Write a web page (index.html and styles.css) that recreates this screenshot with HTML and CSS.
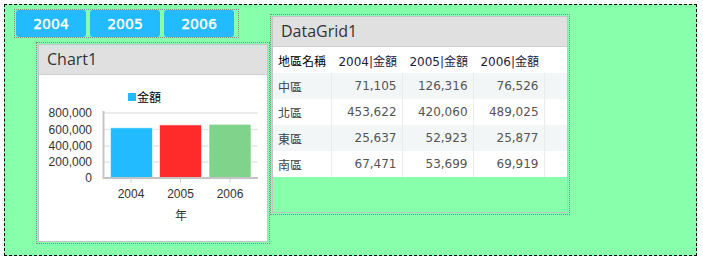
FILE: index.html
```html
<!DOCTYPE html>
<html lang="zh-Hant">
<head>
  <meta charset="UTF-8" />
  <title>Report</title>
  <link rel="stylesheet" href="styles.css">
</head>
<body>

<div class="canvas">
  <div class="left-col">
    <!-- YEAR BUTTONS -->
    <div class="btn-group">
      <button class="year-btn">2004</button>
      <button class="year-btn">2005</button>
      <button class="year-btn">2006</button>
    </div>

    <!-- CHART -->
    <div class="panel chart-panel">
      <div class="panel-inner">
        <div class="panel-title">Chart1</div>
        <div class="chart-body">
          <svg width="228" height="166" viewBox="39 76 228 166">
            <rect x="128" y="94" width="8" height="8" fill="#22bbff"/>
            <text x="137" y="103" class="legend">金額</text>

            <g stroke="#e6e6e6" stroke-width="1.5">
              <line x1="103" y1="114" x2="258" y2="114"/>
              <line x1="103" y1="130.5" x2="258" y2="130.5"/>
              <line x1="103" y1="147" x2="258" y2="147"/>
              <line x1="103" y1="163" x2="258" y2="163"/>
            </g>

            <g class="ylabels" text-anchor="end">
              <text x="92" y="118">800,000</text>
              <text x="92" y="134.5">600,000</text>
              <text x="92" y="151">400,000</text>
              <text x="92" y="167">200,000</text>
              <text x="92" y="183">0</text>
            </g>

            <g stroke="#ffffff" stroke-opacity="0.6" stroke-width="1">
              <rect x="110.5" y="128.8" width="42" height="50.2" fill="#22bbff"/>
              <rect x="159.5" y="125.9" width="42" height="53.1" fill="#ff2b2b"/>
              <rect x="209" y="125.3" width="42" height="53.7" fill="#7fd38a"/>
            </g>

            <g stroke="#c4c4c4" stroke-width="2">
              <line x1="103.5" y1="112" x2="103.5" y2="180"/>
              <line x1="103" y1="179" x2="258" y2="179"/>
            </g>
            <g stroke="#d0d0d0" stroke-width="1">
              <line x1="131" y1="180" x2="131" y2="184"/>
              <line x1="180.5" y1="180" x2="180.5" y2="184"/>
              <line x1="230" y1="180" x2="230" y2="184"/>
            </g>

            <g class="xlabels" text-anchor="middle">
              <text x="131" y="199">2004</text>
              <text x="180.5" y="199">2005</text>
              <text x="230" y="199">2006</text>
              <text x="181" y="221">年</text>
            </g>
          </svg>
        </div>
      </div>
    </div>
  </div>

  <!-- DATA GRID -->
  <div class="panel grid-panel">
    <div class="panel-inner">
      <div class="panel-title">DataGrid1</div>
      <table class="grid">
        <thead>
          <tr>
            <th class="name">地區名稱</th>
            <th>2004|金額</th>
            <th>2005|金額</th>
            <th>2006|金額</th>
            <th class="filler"></th>
          </tr>
        </thead>
        <tbody>
          <tr class="alt">
            <td class="name">中區</td><td>71,105</td><td>126,316</td><td>76,526</td><td class="filler"></td>
          </tr>
          <tr>
            <td class="name">北區</td><td>453,622</td><td>420,060</td><td>489,025</td><td class="filler"></td>
          </tr>
          <tr class="alt">
            <td class="name">東區</td><td>25,637</td><td>52,923</td><td>25,877</td><td class="filler"></td>
          </tr>
          <tr>
            <td class="name">南區</td><td>67,471</td><td>53,699</td><td>69,919</td><td class="filler"></td>
          </tr>
        </tbody>
      </table>
    </div>
  </div>
</div>

</body>
</html>
```

FILE: styles.css
```css
body, html {
  margin: 0;
  padding: 0;
  background: #fff;
  font-family: "DejaVu Sans", "Noto Sans CJK TC", sans-serif;
}

.canvas {
  margin: 4px;
  width: 691px;
  height: 250px;
  border: 1px dashed #000;
  background: #88ffaa;
  display: flex;
  align-items: flex-start;
}

.left-col {
  width: 265px;
  padding-top: 4px;
}

.btn-group {
  display: inline-flex;
  gap: 4px;
  margin-left: 9px;
  padding: 0 4px 0 1px;
  border: 1px dotted #888;
}

.year-btn {
  width: 70px;
  height: 27px;
  border: none;
  border-radius: 3px;
  background: #22bbff;
  color: #fff;
  font-family: "DejaVu Sans", sans-serif;
  font-size: 14px;
  -webkit-text-stroke: 0.4px #fff;
  padding: 0;
}

.panel {
  box-sizing: border-box;
  border: 1px dotted #888;
  padding: 1px;
}

.panel-inner {
  box-sizing: border-box;
  height: 100%;
  border: 1px solid #c4c4c4;
}

.panel-title {
  box-sizing: border-box;
  height: 30px;
  padding-left: 8px;
  background: #e0e0e0;
  border-bottom: 1px solid #cfcfcf;
  color: #333;
  font-family: "Open Sans", sans-serif;
  font-size: 16px;
  line-height: 29px;
}

.chart-panel {
  width: 234px;
  height: 202px;
  margin: 4px 0 0 31px;
}

.chart-body {
  height: 166px;
  background: #fff;
}

.chart-body svg {
  display: block;
}

.legend {
  font-family: "Liberation Sans", "Noto Sans CJK TC", sans-serif;
  font-size: 12px;
  fill: #000;
}

.ylabels text, .xlabels text {
  font-family: "Liberation Sans", "Noto Sans CJK TC", sans-serif;
  font-size: 12px;
  fill: #333;
}

.grid-panel {
  width: 300px;
  height: 201px;
  margin-top: 9px;
}

.grid {
  border-collapse: collapse;
  width: 294px;
  font-size: 12px;
  background: #fff;
}

.grid th, .grid td {
  height: 26px;
  padding: 0 5px;
  text-align: right;
  white-space: nowrap;
  border-left: 1px solid #ebebeb;
  box-sizing: border-box;
}

.grid th {
  font-weight: normal;
  color: #1c1c3c;
  width: 71px;
  border-left: none;
}

.grid th.name {
  color: #000;
}

.grid .name {
  width: 58px;
  text-align: left;
  border-left: none;
}

.grid td {
  color: #555;
}

.grid td.name {
  color: #444;
}

.grid .filler {
  padding: 0;
  width: auto;
}

.grid tr.alt td {
  background: #f2f6f7;
}
```
